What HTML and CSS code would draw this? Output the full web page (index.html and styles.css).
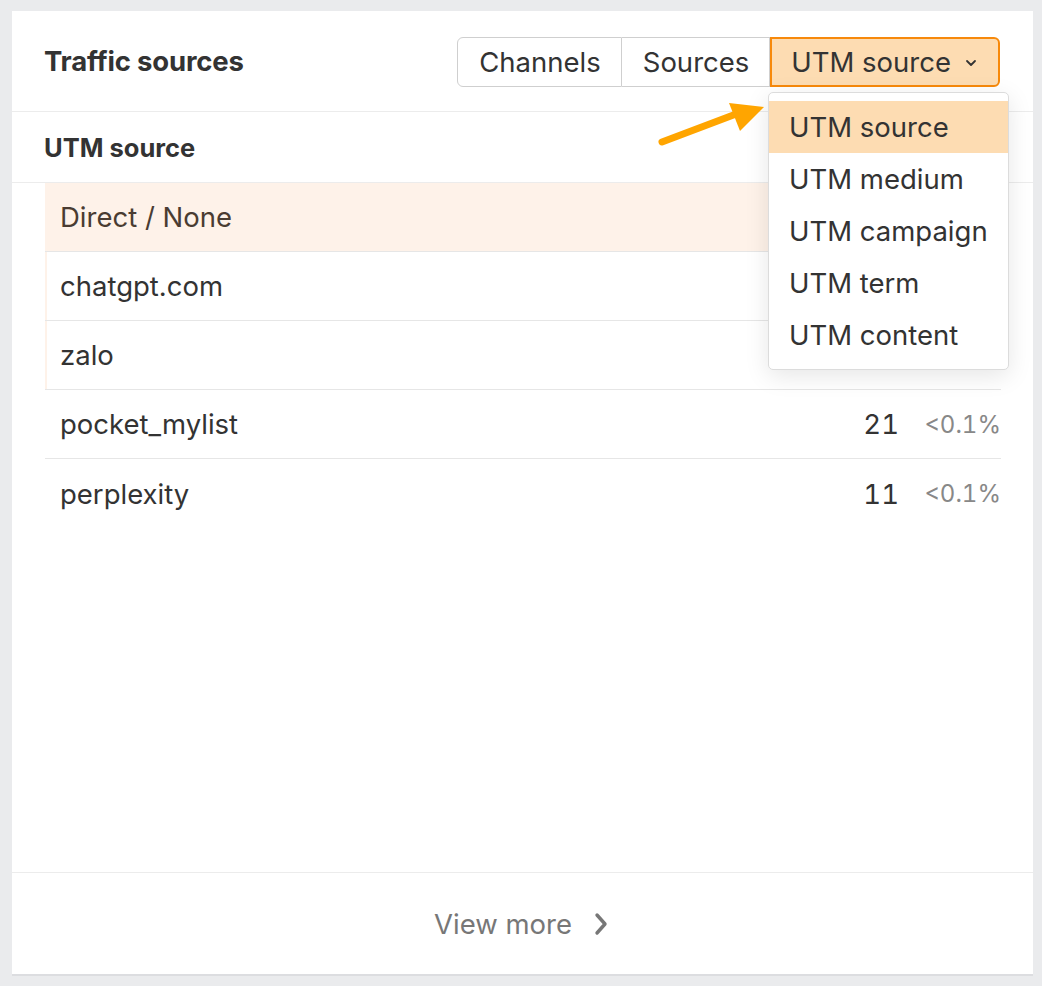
FILE: index.html
```html
<!DOCTYPE html>
<html>
<head>
<meta charset="utf-8">
<link rel="stylesheet" href="styles.css">
</head>
<body>
<div class="card">
  <div class="header">
    <h2 class="title">Traffic sources</h2>
    <div class="tabs">
      <div class="tab">Channels</div>
      <div class="tab">Sources</div>
      <div class="tab active">UTM source
        <svg class="caret" width="12" height="8" viewBox="0 0 12 8"><path d="M2 2 L6 6 L10 2" fill="none" stroke="#333" stroke-width="1.8" stroke-linecap="round" stroke-linejoin="round"/></svg>
      </div>
    </div>
  </div>
  <div class="subheader">UTM source</div>
  <div class="body">
    <div class="row">
      <div class="bar" style="width:96%"></div>
      <span class="name first">Direct / None</span>
    </div>
    <div class="row">
      <div class="bar" style="width:0.2%"></div>
      <span class="name">chatgpt.com</span>
    </div>
    <div class="row">
      <div class="bar" style="width:0.2%"></div>
      <span class="name">zalo</span>
    </div>
    <div class="row">
      <span class="name">pocket_mylist</span>
      <span class="num">21</span>
      <span class="pct">&lt;0.1%</span>
    </div>
    <div class="row">
      <span class="name">perplexity</span>
      <span class="num">11</span>
      <span class="pct">&lt;0.1%</span>
    </div>
  </div>
  <div class="footer">
    <span class="more">View more</span>
    <svg class="chev" width="16" height="26" viewBox="0 0 16 26"><path d="M4 4 L12 13 L4 22" fill="none" stroke="#777" stroke-width="3.4" stroke-linecap="round" stroke-linejoin="round"/></svg>
  </div>

  <div class="menu">
    <div class="item sel">UTM source</div>
    <div class="item">UTM medium</div>
    <div class="item">UTM campaign</div>
    <div class="item">UTM term</div>
    <div class="item">UTM content</div>
  </div>

  <svg class="arrow" width="130" height="60" viewBox="0 0 130 60">
    <line x1="16" y1="54" x2="98" y2="23" stroke="#ffa500" stroke-width="7" stroke-linecap="round"/>
    <polygon points="83,15 118,19 94,43" fill="#ffa500"/>
  </svg>
</div>
</body>
</html>
```

FILE: styles.css
```css
* { box-sizing: border-box; }
html, body { margin: 0; padding: 0; }
body {
  background: #eaebed;
  font-family: Inter, "Noto Sans", sans-serif;
  color: #333;
  width: 1042px;
  height: 986px;
  overflow: hidden;
}
.card {
  position: relative;
  margin: 11px 0 0 12px;
  width: 1021px;
  height: 963px;
  background: #fff;
  box-shadow: 0 2px 0 #dcdde0;
  display: flex;
  flex-direction: column;
}
.header {
  height: 101px;
  border-bottom: 1px solid #ececec;
  display: flex;
  align-items: center;
  justify-content: space-between;
  padding: 0 33px 0 32px;
}
.title {
  margin: 0;
  font-size: 27.5px;
  font-weight: 700;
  color: #333;
  letter-spacing: -0.2px;
}
.tabs {
  display: flex;
  height: 50px;
  margin-top: 1px;
}
.tab {
  height: 50px;
  display: flex;
  align-items: center;
  padding: 0 20px 0 21px;
  font-size: 27.5px;
  border: 1.5px solid #cfcfcf;
  border-left: none;
  color: #333;
  background: #fff;
}
.tab:first-child {
  border-left: 1.5px solid #cfcfcf;
  border-radius: 6px 0 0 6px;
}
.tab.active {
  background: #fddcb2;
  border: 2.5px solid #f7890b;
  border-radius: 0 6px 6px 0;
  padding: 0 21px 0 19px;
  gap: 14px;
}
.caret { margin-top: 2px; }
.subheader {
  height: 71px;
  border-bottom: 1px solid #ececec;
  display: flex;
  align-items: center;
  padding: 0 32px;
  font-size: 25.5px;
  font-weight: 700;
  color: #333;
}
.body {
  flex: 1;
  padding: 0 32px 0 33px;
}
.row {
  position: relative;
  height: 69px;
  border-bottom: 1.5px solid #e6e6e6;
  display: flex;
  align-items: center;
  padding: 0 0 0 15px;
  font-size: 27.5px;
}
.row:last-child { border-bottom: none; }
.bar {
  position: absolute;
  left: 0;
  top: 0;
  bottom: 0;
  background: #fef2e9;
}
.name { position: relative; flex: 1; color: #333; }
.name.first { color: #4a3c32; }
.num {
  position: relative;
  color: #333;
  font-variant-numeric: tabular-nums;
}
.pct {
  position: relative;
  width: 102px;
  text-align: right;
  font-size: 24px;
  color: #888;
  font-variant-numeric: tabular-nums;
}
.footer {
  height: 102px;
  border-top: 1.5px solid #ececec;
  display: flex;
  align-items: center;
  justify-content: center;
  gap: 21px;
  padding-right: 2px;
}
.more { font-size: 27.5px; color: #777; }
.chev { margin-top: 1px; }
.menu {
  position: absolute;
  left: 756px;
  top: 81px;
  width: 241px;
  height: 278px;
  background: #fff;
  border: 1.5px solid #dcdcdc;
  border-radius: 5px;
  box-shadow: 0 6px 24px rgba(0,0,0,0.10);
  padding: 8px 0 7px;
}
.item {
  height: 52px;
  display: flex;
  align-items: center;
  padding-left: 20px;
  font-size: 27.5px;
  color: #333;
}
.item.sel { background: #fddcb2; }
.arrow {
  position: absolute;
  left: 634px;
  top: 77px;
}
```
